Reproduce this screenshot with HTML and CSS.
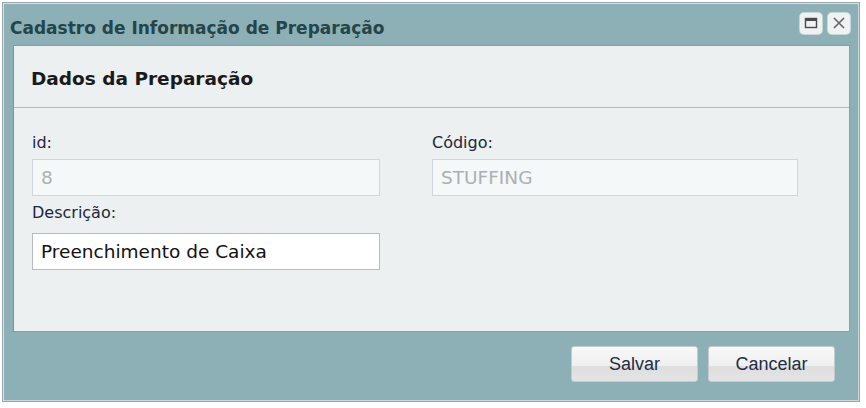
FILE: index.html
```html
<!DOCTYPE html>
<html>
<head>
<meta charset="utf-8">
<link rel="stylesheet" href="styles.css">
</head>
<body>
<div class="window">
  <div class="titlebar">
    <span class="title">Cadastro de Informação de Preparação</span>
    <div class="tools">
      <span class="tool"><svg width="16" height="14" viewBox="0 0 16 14"><rect x="2.5" y="2.5" width="11" height="9" fill="none" stroke="#4a4a4a" stroke-width="1.4"/><rect x="2.5" y="2.5" width="11" height="2.5" fill="#4a4a4a"/></svg></span>
      <span class="tool"><svg width="16" height="14" viewBox="0 0 16 14"><path d="M3 2 L13 12 M13 2 L3 12" stroke="#666" stroke-width="1.6" fill="none"/></svg></span>
    </div>
  </div>
  <div class="panel">
    <div class="panel-head">Dados da Preparação</div>
    <div class="form">
      <div class="field">
        <label class="lbl">id:</label>
        <div class="input disabled">8</div>
      </div>
      <div class="field">
        <label class="lbl">Código:</label>
        <div class="input disabled">STUFFING</div>
      </div>
      <div class="field row2">
        <label class="lbl">Descrição:</label>
        <div class="input">Preenchimento de Caixa</div>
      </div>
    </div>
  </div>
  <div class="footer">
    <button class="btn">Salvar</button>
    <button class="btn">Cancelar</button>
  </div>
</div>
</body>
</html>
```
FILE: styles.css
```css
html, body { margin: 0; padding: 0; background: #ffffff; }
body { font-family: "DejaVu Sans", Verdana, sans-serif; }
.window {
  margin: 2px 0 0 2px;
  width: 856px;
  height: 398px;
  background: #8cb0b6;
  border: 1px solid #9aa6a9;
  box-shadow: inset 1px 1px 0 #d6e4e6, inset -1px -1px 0 #c8d8da;
  display: flex;
  flex-direction: column;
}
.titlebar {
  height: 42px;
  display: flex;
  align-items: center;
  justify-content: space-between;
  padding: 0 9px 0 7px;
}
.title {
  font-size: 17px;
  font-weight: bold;
  color: #244549;
  padding-top: 7px;
}
.tools { display: flex; gap: 6px; margin-top: -2px; }
.tool {
  width: 22px; height: 21px;
  background: #eef2f2;
  border-radius: 4px;
  display: flex; align-items: center; justify-content: center;
  box-shadow: 0 0 0 1px #c9d6d8;
}
.panel {
  margin: 0 9px 0 10px;
  height: 285px;
  background: #ecf0f1;
  border: 1px solid #8a9ea2;
  border-left-color: #7e959a;
}
.panel-head {
  height: 62px;
  border-bottom: 1px solid #9fbbe8;
  font-size: 18.5px;
  font-weight: bold;
  color: #1a1a1a;
  padding-left: 17px;
  padding-top: 3px;
  box-sizing: border-box;
  display: flex;
  align-items: center;
}
.form {
  display: grid;
  grid-template-columns: 348px 366px;
  column-gap: 52px;
  padding: 23px 0 0 18px;
}
.field { display: flex; flex-direction: column; }
.lbl {
  font-size: 16px;
  color: #1c2738;
  height: 24px;
  line-height: 24px;
  margin-bottom: 4px;
}
.row2 .lbl { margin-top: 5px; margin-bottom: 8px; }
.input {
  height: 37px;
  box-sizing: border-box;
  border: 1px solid #b5bcc8;
  background: #ffffff;
  font-family: "DejaVu Sans", sans-serif;
  font-size: 18.5px;
  color: #111;
  padding-left: 8px;
  display: flex;
  align-items: center;
}
.input.disabled {
  background: #f5f8f8;
  border-color: #d0d6dc;
  color: #aab0b4;
}
.footer {
  flex: 1;
  display: flex;
  justify-content: flex-end;
  align-items: flex-start;
  gap: 10px;
  padding: 14px 24px 0 0;
}
.btn {
  width: 127px;
  height: 36px;
  border: 1px solid #c5cbcd;
  border-radius: 3px;
  background: linear-gradient(#f8f8f8 0%, #efefef 55%, #dedede 56%, #e4e4e4 100%);
  font-family: "Liberation Sans", Arial, sans-serif;
  font-size: 18px;
  color: #222b44;
  padding: 0;
}
```
